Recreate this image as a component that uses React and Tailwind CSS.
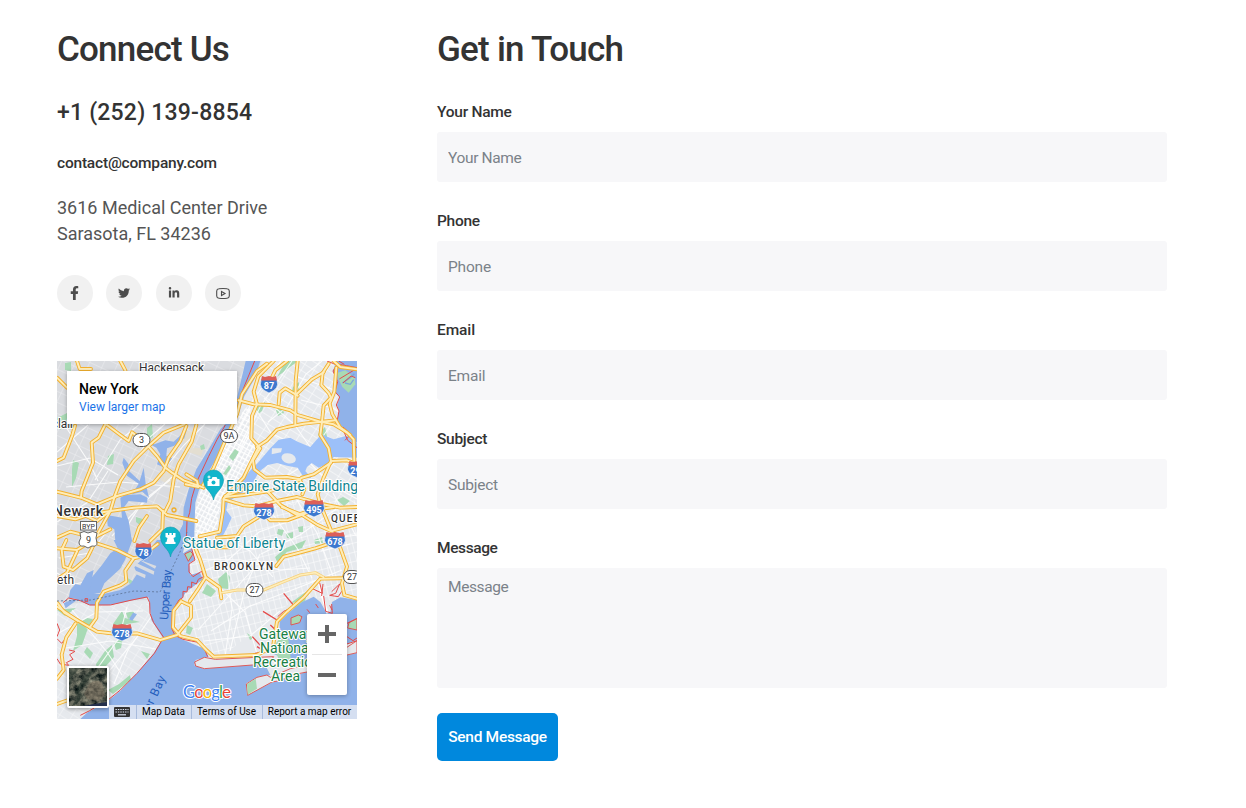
import React from "react";
import { FaFacebookF, FaTwitter, FaLinkedinIn } from "react-icons/fa";

// Northern and southern halves are drawn on a grid of three units per pixel.
const NORTH = "translate(57 361) scale(.33333)";
const SOUTH = "translate(57 540) scale(.33333)";

const northRoads = [
  "M545 118L590 130L640 132L700 148L722 162L790 182L830 190L870 214L890 235L892 300",
  "M722 0L716 60L715 190",
  "M600 258L630 238L660 206L690 198L740 188L795 182L835 178",
  "M815 8L797 36L793 72L815 96L822 110L800 134L795 182L790 222L815 262L822 300L800 350L782 400L790 430L822 508L850 540",
  "M838 20L832 92L818 128L826 160L850 200L880 222",
  "M650 0L604 46L590 92L600 130L585 165L583 232L610 262L588 298L592 325L625 350L690 348L728 355L742 385L736 400",
  "M604 260L578 312L560 350L500 412L498 450L488 512L428 526",
  "M690 0L655 28L645 48",
  "M630 8L600 30L555 100L540 160L500 250L470 320L438 372",
  "M822 300L870 298L900 310",
  "M822 305L770 340L735 350L700 375L640 390L560 402L505 408",
  "M500 415L560 433L600 436L660 420L720 408L790 428L850 440L900 438",
  "M505 405L570 380L625 384L670 432L720 462L762 448L830 438",
  "M600 440L640 478L690 478L780 445",
  "M675 438L735 462L782 492L822 510L900 490",
  "M605 468L560 496L540 525L480 530",
  "M900 25L850 18L830 0",
  "M665 130L668 95L685 82L722 104",
  "M720 98L765 55L800 34",
  "M150 192L190 222L215 240L225 214L260 240L300 285L325 320L345 335L380 358L440 380",
  "M382 190L320 215L275 255L230 300L190 360L175 400L160 450L110 540",
  "M388 195L370 240L335 290L320 330L290 365L250 385L180 405L120 430L72 410L0 392",
  "M55 450L120 480L160 450L230 440L300 436L330 462L418 480",
  "M418 192L404 242L365 310L350 355L340 420L325 450",
  "M145 190L125 230L104 245L108 305L74 390L72 408",
  "M54 194L45 225L20 290L0 300",
  "M0 465L55 475L100 460L160 450",
  "M0 530L40 512L110 530L160 505",
  "M318 450L316 505L280 540", "M270 465L246 500L232 540",
  "M388 340L420 360L424 378L386 370",
  "M60 0L68 24L102 24M0 50L30 80M190 0L205 28",
];
const southRoads = [
  "M0 25L60 30L100 5M94 2L180 30L230 55L252 50L302 12",
  "M230 55L205 92L208 124L190 136L140 155L120 188L118 234L98 262",
  "M0 200L60 240L120 275L180 282L240 280L310 300L360 285L402 232L402 198L372 184",
  "M405 0L430 60L446 112L425 145L398 184",
  "M372 184L350 212L348 262L370 288L420 300L448 330L470 350L600 345L648 320L660 245L690 215L740 172L790 116L900 114",
  "M56 250L28 292L14 344L20 390L0 416",
  "M446 112L488 142L493 175",
  "M845 10L870 80L855 130L862 165L900 176",
  "M658 78L680 50L720 40L775 25L835 5",
  "M28 0L14 30L20 80L48 90L90 55L115 5",
  "M0 118L30 98L60 34",
  "M0 492L34 480", "M478 22H520V0",
  "M0 188L22 218L62 242",
];

const arterials = [
  "M57 452 L80 432 L88 425", "M57 466 L90 458 L118 475", "M64 424 L90 464 L98 481",
  "M95 480 L120 440 L140 424", "M125 476 L150 437 L165 424", "M155 480 L184 445 L205 424",
  "M66 487 L120 482 L180 487", "M57 522 L88 502 L108 471", "M112 536 L140 506 L172 477",
  "M59 558 L90 553 L116 520", "M57 573 L75 584 L104 578", "M122 534 L144 500 L170 480",
  "M57 634 L97 612 L143 611", "M66 648 L110 641 L156 649", "M72 610 L107 652 L122 675",
  "M127 607 L119 638 L99 666 L78 680", "M151 617 L128 650 L114 684", "M101 681 L142 631",
  "M205 485 L232 441 L253 400 L281 361", "M208 511 L231 470 L260 407 L292 361",
  "M193 531 L220 535 L250 551 L273 577", "M195 559 L241 560 L280 570 L310 568",
  "M188 577 L226 562 L259 532 L312 513", "M211 631 L250 606 L300 587 L342 570",
  "M212 580 L245 612 L257 654", "M225 553 L232 609 L225 657", "M198 630 L255 567",
  "M269 509 L297 548 L312 578", "M292 492 L317 533 L333 576", "M261 554 L300 535 L339 507",
  "M280 480 L309 462 L330 484 L357 499", "M333 493 L356 536", "M257 411 L271 433 L299 447",
  "M264 398 L294 424 L318 458", "M268 422 L287 407 L306 374 L322 361", "M298 377 L357 398",
  "M301 400 L333 408 L357 425", "M330 426 L315 448 L310 461", "M204 641 L250 636 L280 611",
  "M230 651 L245 588 L260 554", "M314 541 L357 535", "M321 551 L350 544",
];

const parks = [
  "M284 361 L298 361 L286 370 L277 377 L283 366 Z",
  "M276 410 L282 407 L284 413 L278 416 Z", "M256 407 L265 402 L262 411 L258 414 Z",
  "M223 474 L229 465 L231 468 L226 475 Z", "M229 457 L235 449 L239 452 L233 461 Z",
  "M147 428 L152 424 L153 437 L147 441 Z", "M57 418 L67 413 L68 424 L60 430 Z",
  "M73 460 L79 463 L76 478 L72 487 L72 469 Z", "M108 456 L114 454 L113 464 L107 465 Z",
  "M119 558 L123 561 L121 568 L115 570 Z", "M136 517 L143 519 L141 526 L136 522 Z",
  "M126 577 L136 583 L134 589 L129 583 Z", "M77 624 L87 618 L93 619 L87 631 L82 645 L73 651 L77 636 Z",
  "M96 664 L105 651 L112 645 L114 657 L106 666 L97 669 Z", "M114 643 L123 638 L121 648 L116 650 Z",
  "M57 610 L76 608 L65 616 Z", "M126 613 L133 611 L136 616 L128 619 Z",
  "M141 651 L150 654 L147 659 Z", "M87 647 L93 653 L90 659 L84 652 Z",
  "M119 684 L130 675 L131 680 L113 694 L108 690 Z", "M218 579 L226 572 L230 577 L228 589 L220 588 Z",
  "M202 593 L207 584 L216 591 L211 597 Z", "M278 529 L284 530 L282 536 L277 534 Z",
  "M286 534 L293 532 L293 539 L287 538 Z", "M298 527 L303 526 L303 532 L299 532 Z",
  "M314 540 L322 537 L323 543 L315 544 Z", "M337 500 L343 497 L350 501 L344 506 Z",
  "M275 557 L286 548 L306 540 L302 548 L287 552 L277 562 Z",
  "M290 613 L307 592 L305 602 L290 617 Z", "M247 633 L254 638 L250 640 Z",
  "M187 625 L193 628 L190 635 L186 633 Z",
  "M318 434 L325 427 L328 441 L322 445 Z", "M293 387 L299 382 L299 397 L291 394 Z",
  "M200 446 L204 444 L205 449 L201 450 Z", "M65 363 L71 362 L71 371 L65 370 Z",
  "M113 624 L122 611 L125 618 L140 622 L127 624 L119 630 Z",
];

function InterstateShield({ x, y, n }) {
  return (
    <g transform={`translate(${x} ${y})`}>
      <path d="M-7-7H7L8-4Q11 4 0 8.500Q-11 4-8-4Z" fill="#3c78cf" stroke="#fff" strokeWidth=".6" transform={n.length > 2 ? "scale(1.22 1)" : undefined} />
      <path d="M-7-8.500L-4-7.500L0-8.500L4-7.500L7-8.500L8-4H-8Z" fill="#dd5f58" transform={n.length > 2 ? "scale(1.22 1)" : undefined} />
      <text y="4" textAnchor="middle" fontSize="9" fontWeight="700" fill="#fff">{n}</text>
    </g>
  );
}
function RouteBadge({ x, y, n }) {
  return (
    <g transform={`translate(${x} ${y})`}>
      <rect x="-8.5" y="-6.5" width="17" height="13" rx="6.5" fill="#fff" stroke="#555" />
      <text y="3.3" textAnchor="middle" fontSize="9" fill="#333">{n}</text>
    </g>
  );
}
function Pin({ x, y, children }) {
  return (
    <g transform={`translate(${x} ${y})`}>
      <path d="M0 19C-1 11-10 8-10-1A10 10 0 0 1 10-1C10 8 1 11 0 19Z" fill="#12b5cb" stroke="#0e9aad" strokeWidth=".6" />
      {children}
    </g>
  );
}

function Roads() {
  return (
    <g fill="none" strokeLinecap="round" strokeLinejoin="round">
      <path transform={SOUTH} d="M495 158L540 150L620 150L680 125L730 105L775 98L800 112" stroke="#f5cf7a" strokeWidth="9" />
      <g stroke="#f3b12f" strokeWidth="11.5">
        <g transform={NORTH}>{northRoads.map((d) => <path key={d} d={d} />)}</g>
        <g transform={SOUTH}>{southRoads.map((d) => <path key={d} d={d} />)}</g>
      </g>
      <g stroke="#feedb9" strokeWidth="6">
        <g transform={NORTH}>{northRoads.map((d) => <path key={d} d={d} />)}</g>
        <g transform={SOUTH}>{southRoads.map((d) => <path key={d} d={d} />)}</g>
      </g>
      <path transform={SOUTH} d="M495 158L540 150L620 150L680 125L730 105L775 98L800 112" stroke="#feedb9" strokeWidth="5" />
      <circle cx="174" cy="510" r="2" stroke="#f0ae2b" strokeWidth="1.3" />
    </g>
  );
}

function Water() {
  return (
    <>
      <g transform={NORTH}>
        <g fill="#90b2e9">
          <path d="M566 0H610L592 55L562 105L545 160L510 222L480 290L445 348L425 390L415 425L411 545H350L378 490L380 440L395 385L418 325L455 265L490 205L520 175L540 110Z" />
          <path d="M150 462L195 470L190 410L205 402L250 400L272 410L270 425L215 420L200 440L215 480L225 540H175L172 505L152 495Z" />
          <path d="M838 0L828 30L842 62L834 92L848 108L840 132L846 150L840 182L862 215L900 245V0Z" />
        </g>
        <g fill="#9cc0f9">
          <path d="M603 305L640 262L665 236L700 230L722 242L760 258L786 228L798 222L830 235L870 224L900 245V290L830 288L812 308L785 320L764 306L750 318L745 330L764 352L738 346L722 320L690 314L660 306L632 312L606 332L588 365L560 392L535 408L512 425L508 448L524 470L508 505L494 530L478 522L488 500L494 442L505 412L546 374L578 330Z" />
          <path d="M262 240L292 250L325 238L350 242L390 205L382 232L352 254L330 262L328 285L345 292L325 322L300 310L310 280L298 260Z" fill="#90b2e9" />
          <path d="M200 290L215 310L216 330L248 360L260 320L266 368L276 410L256 392L225 400L245 368L210 344L196 305Z" fill="#90b2e9" />
        </g>
        <g fill="#e6e9ed">
          <ellipse cx="695" cy="292" rx="22" ry="15" transform="rotate(15 695 292)" />
          <path d="M645 262L675 262L672 274L644 280Z" />
        </g>
        <path d="M842 35L865 28L893 50L895 70L875 95L856 78L845 55Z" fill="#a8dab5" />
        <path d="M856 66L880 50L892 38M864 66L880 70L890 56" fill="none" stroke="#7aa7d8" strokeWidth="4" />
      </g>
      <g transform={SOUTH}>
        <g fill="#90b2e9">
          <path d="M300 0L262 50L232 82L240 102L222 130L190 150L140 162L90 162L50 176L20 190L26 205L60 180L100 196L160 195L230 180L275 172L283 240L318 294L290 340L240 400L190 452L150 485L90 518L70 537H900V338L870 345L750 395L640 430L570 465L568 430L600 412L640 405L625 375L590 372L440 386L412 376L416 360L455 350L442 326L375 298L346 270L346 210L370 182L388 155L438 118L428 96L400 105L396 70L412 60L404 25L378 40L385 0Z" />
          <path d="M170 0L182 25L160 40L135 75L90 130L62 162L92 166L130 158L142 130L188 88L204 60L216 28L226 0Z" />
          <path d="M40 150L55 132L70 136L90 100L110 90L100 140L78 174L35 175Z" />
          <path d="M668 245L700 214L735 187L770 170L790 186L805 212L820 216L825 186L850 172L900 180V300L870 312L750 368L720 376L690 366L664 348L650 342L667 312Z" />
        </g>
        <path d="M216 238L228 218L240 222L226 242Z" fill="#90b2e9" />
        <g fill="#dadce0">
          <path d="M236 68L292 94L290 104L234 78Z" />
          <path d="M243 58L298 78L294 86Z" />
          <path d="M216 84L266 104L264 115L218 94Z" />
        </g>
        <g fill="#a8dab5" stroke="#df5654" strokeWidth="3">
          <path d="M702 234L724 225L735 230L728 248L702 255Z" />
          <path d="M383 42L400 34L408 42L394 64Z" />
          <path d="M876 248L900 235V270L872 264Z" />
        </g>
        <path d="M700 190L745 157L758 160L735 184Z" fill="#a8dab5" />
        <path d="M648 322L670 292L694 298L702 360L668 362Z" fill="#a8dab5" />
        <path d="M413 366L442 352L475 358L600 352L650 350L638 366L600 374L442 386L416 378Z" fill="#e6e9ed" stroke="#dd5a59" strokeWidth="3" />
        <path d="M568 432L600 412L630 405L640 412L700 386L750 374L850 335L900 302V338L870 345L750 396L704 405L670 422L645 426L572 466Z" fill="#e6e9ed" stroke="#dd5a59" strokeWidth="3" />
        <path d="M570 432L596 416L600 446L572 464Z" fill="#a8dab5" />
        <path d="M786 128L794 165L812 220" fill="none" stroke="#fff" strokeWidth="7" />
      </g>
    </>
  );
}

function Shorelines() {
  return (
    <g fill="none" stroke="#e44b4a" strokeLinejoin="round">
      <g transform={NORTH} strokeWidth="3">
        <path d="M593 0L552 100M505 192L480 236L455 286L418 365L404 412L398 455L390 480L388 540" />
        <path d="M810 0L840 12L828 30L842 62L834 92L848 108L838 132L846 150L840 182L862 215L872 238L900 260M832 8L868 14L900 20M845 0L862 10" />
        <path d="M858 66L882 45L895 50M847 54L900 22M858 198L882 220L864 238" />
      </g>
      <g transform={SOUTH} strokeWidth="3">
        <path d="M18 188L35 174L70 182L98 195L160 195L225 180L270 171L278 188L279 220L290 248L320 292L292 340L240 400L212 428L190 450L158 476L98 512L70 526" />
        <path d="M404 26L414 60L396 72L396 96L408 110L434 94L440 110L424 118L418 132L404 126L404 142L392 140L390 156L378 154L378 172L366 180L346 212L344 265L354 286L378 298L418 306L440 322L452 350" />
        <path d="M0 250L8 270L0 290M0 296L14 310L22 300M36 330L54 334L38 344L48 358L28 368L35 376L10 372L0 356" />
        <path d="M84 176H92V185H84Z" />
        <path d="M618 214L660 240M680 160L710 196M640 255L662 275M586 290L610 316M600 320L634 340M588 342L624 334" strokeWidth="4" />
        <path d="M662 230L680 214L700 205M788 128L796 160L762 144M798 132L794 168M824 155L848 132L836 160L818 166L844 170L854 154" />
        <path d="M750 208L758 218M776 192L784 204M800 168L806 214L826 220L824 192M818 196L825 210" />
        <path d="M870 250L900 236M870 290L888 302L900 294M870 312L900 302" />
      </g>
    </g>
  );
}

function MapDrawing() {
  return (
    <svg viewBox="57 361 300 358" className="block h-[358px] w-[300px] font-[Roboto,sans-serif]">
      <defs>
        <pattern id="grid" width="11" height="7" patternUnits="userSpaceOnUse" patternTransform="rotate(32)">
          <path d="M0 0H11M0 0V7" stroke="#fff" strokeWidth="1" />
        </pattern>
        <pattern id="grid2" width="6" height="9" patternUnits="userSpaceOnUse" patternTransform="rotate(-14)">
          <path d="M0 0H6M0 0V9" stroke="#fff" strokeWidth="1" />
        </pattern>
        <pattern id="grid3" width="13" height="10" patternUnits="userSpaceOnUse" patternTransform="rotate(25)">
          <path d="M0 0H13M0 0V10" stroke="#f2f3f5" strokeWidth=".8" />
        </pattern>
        <pattern id="manhattan" width="4" height="5" patternUnits="userSpaceOnUse" patternTransform="rotate(28)">
          <path d="M0 0H4M0 0V5" stroke="#fff" strokeWidth="2.4" />
        </pattern>
      </defs>
      <rect x="57" y="361" width="300" height="358" fill="#dadce0" />
      <rect x="57" y="361" width="200" height="250" fill="url(#grid3)" />
      <path d="M262 361H357V719H57V604L148 600L180 560L190 500L213 460Z" fill="#e6e9ed" />
      <path d="M267 361H357V505H255L230 440Z" fill="url(#grid)" />
      <path d="M225 500H357V605L300 595L205 670L165 620L200 520Z" fill="url(#grid2)" />
      <path d="M57 604H160V719H57Z" fill="url(#grid)" opacity=".65" />
      <path d="M250 403L251 435L256 450L240 478L221 500L216 533L196 538L195 510L203 480L222 446L236 420Z" fill="url(#manhattan)" />
      <g fill="#e6dfce" opacity=".8">
        <path d="M187 430L196 433L193 448L204 448L201 456L188 452L183 440Z" />
        <path d="M166 471L176 475L170 485L160 480Z" />
      </g>
      <g fill="#a8dab5">{parks.map((d) => <path key={d} d={d} />)}</g>
      <g fill="none" stroke="#fff" strokeWidth="1.1" opacity=".85">
        {arterials.map((d) => <path key={d} d={d} />)}
      </g>
      <Water />
      <Shorelines />
      <Roads />
      <path d="M57 601L91 600L119 594L134 591L160 592L169 575L180 552L187 532" fill="none" stroke="#62799e" strokeWidth=".9" strokeDasharray="2 2" />

      <InterstateShield x={269} y={384.5} n="87" />
      <InterstateShield x={264} y={511.5} n="278" />
      <InterstateShield x={314} y={508.5} n="495" />
      <InterstateShield x={335} y={540.5} n="678" />
      <InterstateShield x={143.5} y={551.5} n="78" />
      <InterstateShield x={122} y={632.5} n="278" />
      <InterstateShield x={358} y={469.5} n="295" />
      <RouteBadge x={141.5} y={440} n="3" />
      <RouteBadge x={229} y={436} n="9A" />
      <RouteBadge x={254.5} y={590} n="27" />
      <RouteBadge x={352} y={577} n="27" />
      <path d="M80 533Q84 530 88 533Q93 530 97 533Q95 538 97 543Q97 547 92 546L88 548L84 546Q79 547 79 542Q82 538 80 533Z" fill="#fff" stroke="#666" />
      <text x="88.5" y="543" textAnchor="middle" fontSize="9" fill="#333">9</text>
      <rect x="80.5" y="521.5" width="16" height="8.5" fill="#fff" stroke="#666" />
      <text x="88.5" y="528.5" textAnchor="middle" fontSize="7" fill="#333">BYP</text>

      <Pin x={213.5} y={481}>
        <path d="M-5-2H-2L-1-4H3L4-2H6V5H-6V0H-5Z" fill="#fff" />
        <circle cx="0" cy="1.5" r="2" fill="#12b5cb" /><path d="M-6-4H-3M-4.500-5.500V-2.500" stroke="#fff" strokeWidth="1" />
      </Pin>
      <Pin x={170.5} y={538}>
        <path d="M-5-5H-2.5V-3H-1.2V-5H1.2V-3H2.5V-5H5V-1L3 0L4 4H5V6H-5V4H-4L-3 0L-5-1Z" fill="#fff" />
      </Pin>

      <g stroke="#fff" strokeWidth="2.2" strokeLinejoin="round" paintOrder="stroke">
        <g fill="#333">
          <text x="139" y="371.500" fontSize="12" textLength="65">Hackensack</text>
          <text x="52" y="428" fontSize="12" textLength="22">clair</text>
          <text x="53" y="516" fontSize="14" fontWeight="500" textLength="50">Newark</text>
          <text x="57" y="584" fontSize="12" textLength="17">eth</text>
          <text x="214" y="569.5" fontSize="10" fontWeight="500" textLength="59">BROOKLYN</text>
          <text x="331" y="521.5" fontSize="10" fontWeight="500" textLength="44">QUEENS</text>
        </g>
        <g fill="#0f8591">
          <text x="226" y="491" fontSize="14" textLength="132">Empire State Building</text>
          <text x="183" y="548" fontSize="14" textLength="102">Statue of Liberty</text>
        </g>
        <g fill="#188045" fontSize="14">
          <text x="259" y="639" textLength="54">Gateway</text>
          <text x="260" y="653" textLength="52">National</text>
          <text x="253" y="667" textLength="67">Recreation</text>
          <text x="271" y="681" textLength="29">Area</text>
        </g>
      </g>
      <g fill="#255fbd" fontSize="12">
        <text transform="translate(168 620) rotate(-86)" textLength="50">Upper Bay</text>
        <text transform="translate(143 727) rotate(-65)" textLength="54">ower Bay</text>
      </g>
      <text x="183" y="698" fontFamily="Lato" fontSize="17" textLength="48" stroke="#fff" strokeWidth="2" paintOrder="stroke">
        <tspan fill="#4285f4">G</tspan><tspan fill="#ea4335">o</tspan><tspan fill="#fbbc04">o</tspan><tspan fill="#4285f4">g</tspan><tspan fill="#34a853">l</tspan><tspan fill="#ea4335">e</tspan>
      </text>
    </svg>
  );
}

function SatelliteThumb() {
  return (
    <svg viewBox="0 0 38 38" className="block h-full w-full">
      <defs>
        <filter id="terrain" x="0" y="0" width="100%" height="100%" colorInterpolationFilters="sRGB">
          <feTurbulence type="fractalNoise" baseFrequency=".17" numOctaves="4" seed="8" />
          <feColorMatrix values="0.9 0 0 0 -0.13 0.82 0 0 0 -0.07 0.7 0 0 0 -0.05 0 0 0 0 1" />
        </filter>
      </defs>
      <rect width="38" height="38" filter="url(#terrain)" />
      <path d="M0 0H11L4 8 0 24ZM14 10Q20 2 24 3L20 11 11 23 14 28 8 36 3 38 8 29 6 24Z" fill="#1d3029" opacity=".4" />
      <path d="M20 16Q27 10 33 15L36 27 30 33 18 31 15 26Z" fill="#94836f" opacity=".45" />
      <path d="M14 38L25 36 38 34V38Z" fill="#24304c" />
    </svg>
  );
}

function MapCard() {
  return (
    <div className="relative h-[358px] w-[300px] overflow-hidden font-[Roboto,sans-serif]">
      <MapDrawing />
      <div className="absolute left-[10px] top-[10px] h-[53px] w-[170px] bg-white px-3 pt-[9px] shadow-[0_1px_4px_rgba(0,0,0,0.3)]">
        <div className="text-sm/[18px] font-medium text-black">New York</div>
        <div className="text-xs/[18px] text-[#1a73e8]">View larger map</div>
      </div>
      <div className="absolute left-[10px] top-[305px] h-[42px] w-[42px] rounded-xs border-2 border-white bg-white shadow-[0_1px_4px_rgba(0,0,0,0.4)]">
        <SatelliteThumb />
      </div>
      <div className="absolute left-[250px] top-[253px] flex h-[81px] w-10 flex-col items-center rounded-xs bg-white shadow-[0_1px_4px_rgba(0,0,0,0.3)]">
        <svg viewBox="0 0 40 40" className="h-10 w-10 fill-[#666]"><path d="M18 11h4v7h7v4h-7v7h-4v-7h-7v-4h7z" /></svg>
        <div className="h-px w-[30px] bg-[#e6e6e6]" />
        <svg viewBox="0 0 40 40" className="h-10 w-10 fill-[#666]"><path d="M11 18h18v4H11z" /></svg>
      </div>
      <div className="absolute bottom-0 left-[52px] flex h-[14px] w-[248px] items-center bg-[#d9e1f1]/95 text-[10px]/[14px] text-black">
        <div className="flex h-full w-[28px] items-center justify-center border-r border-[#a8bbdc] pr-[2px]">
          <svg viewBox="0 0 16 10" className="h-[10px] w-4">
            <rect width="16" height="10" rx="1" fill="#333" />
            <path d="M1.500 2.500H14.500M1.500 5H14.500" stroke="#dce3f1" strokeWidth="1.200" strokeDasharray="1.400 1" />
            <path d="M4 7.800H12" stroke="#dce3f1" strokeWidth="1.200" />
          </svg>
        </div>
        <div className="h-full w-[55px] border-r border-[#a8bbdc] pr-px text-center">Map Data</div>
        <div className="h-full w-[71px] border-r border-[#a8bbdc] pr-px text-center">Terms of Use</div>
        <div className="h-full flex-1 whitespace-nowrap pr-px text-center">Report a map error</div>
      </div>
    </div>
  );
}

const fields = [
  ["Your Name", "tracking-[-0.25px]", "placeholder:tracking-[-0.35px]"],
  ["Phone", "tracking-[-0.3px]", "placeholder:tracking-[-0.2px]"],
  ["Email", "tracking-[-0.1px]", "placeholder:tracking-[-0.2px]"],
  ["Subject", "tracking-[-0.3px]", "placeholder:tracking-[-0.25px]"],
];

function Social({ children, label }) {
  return (
    <a href="#" aria-label={label} className="flex size-9 items-center justify-center rounded-full bg-[#f1f1f1] text-[#4d4d4d]">
      {children}
    </a>
  );
}

export default function App() {
  return (
    <main className="flex h-[808px] gap-20 bg-white pl-[57px] pt-[27px] font-[Roboto,sans-serif] text-[#333]">
      <section className="w-[300px] shrink-0">
        <h2 className="text-[35px]/[46px] font-medium whitespace-nowrap tracking-[-0.8px]">Connect Us</h2>
        <p className="mt-[25px] text-[23px]/[30px] font-medium whitespace-nowrap tracking-[0.2px]">+1 (252) 139-8854</p>
        <p className="mt-[23px] text-[15.5px]/6 font-medium whitespace-nowrap tracking-[-0.2px]">contact@company.com</p>
        <address className="mt-5 text-lg/[26px] not-italic text-[#555]">
          3616 Medical Center Drive<br />Sarasota, FL 34236
        </address>
        <div className="mt-7 flex gap-[13.4px]">
          <Social label="Facebook"><FaFacebookF className="mr-px h-[14px] w-[9px]" /></Social>
          <Social label="Twitter"><FaTwitter className="size-3" /></Social>
          <Social label="LinkedIn"><FaLinkedinIn className="size-3" /></Social>
          <Social label="YouTube">
            <svg viewBox="0 0 14 11" className="h-[11px] w-[14px]" fill="none" stroke="currentColor" strokeWidth="1.1">
              <path d="M3 .8Q7 .3 11 .8Q13.200 1 13.300 3V8Q13.200 10 11 10.200Q7 10.700 3 10.200Q.8 10 .7 8V3Q.8 1 3 .8Z" />
              <path d="M5.500 3.500L9 5.500L5.500 7.500Z" />
            </svg>
          </Social>
        </div>
        <div className="mt-[50px]"><MapCard /></div>
      </section>
      <section className="w-[730px] shrink-0">
        <h2 className="text-[35px]/[46px] font-medium whitespace-nowrap tracking-[-0.75px]">Get in Touch</h2>
        <form className="mt-[27px]">
          {fields.map(([name, tracking, placeholder]) => (
            <label key={name} className="mb-[27px] block">
              <span className={`block text-[15.5px]/6 font-medium ${tracking}`}>{name}</span>
              <input placeholder={name} className={`mt-2 block h-[50px] w-full rounded-[3px] bg-[#f7f7f9] px-[11px] pt-px text-[15.5px] placeholder:text-[#7b8289] ${placeholder}`} />
            </label>
          ))}
          <label className="block">
            <span className="block text-[15.5px]/6 font-medium tracking-[-0.4px]">Message</span>
            <textarea placeholder="Message" className="mt-2 block h-[120px] w-full resize-none rounded-[3px] bg-[#f7f7f9] px-[11px] py-[7px] text-[15.5px]/6 placeholder:tracking-[-0.4px] placeholder:text-[#7b8289]" />
          </label>
          <button type="button" className="mt-[25px] h-12 w-[121px] rounded-[5px] bg-[#0088dd] pt-[2px] text-[15.5px] font-medium whitespace-nowrap tracking-[-0.3px] text-white">Send Message</button>
        </form>
      </section>
    </main>
  );
}
